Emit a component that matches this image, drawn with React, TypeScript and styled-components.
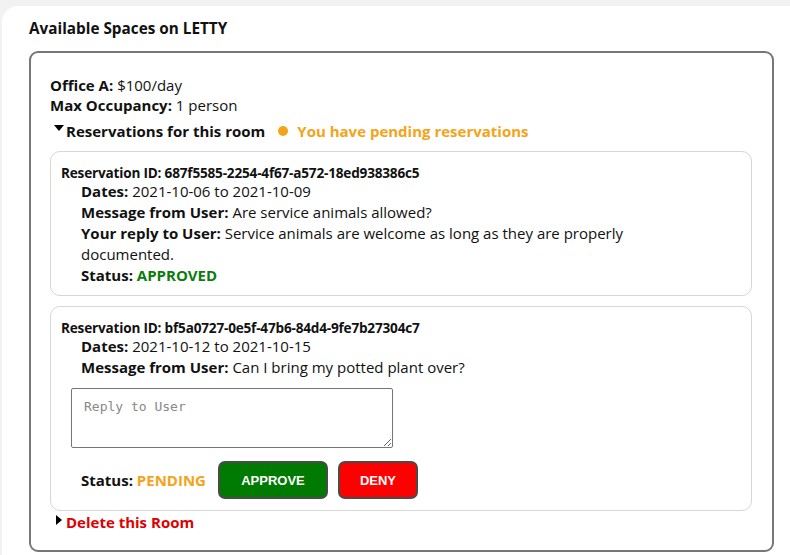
import React from "react";
import styled, { createGlobalStyle } from "styled-components";

const Global = createGlobalStyle`
  html, body { margin: 0; padding: 0; }
  body {
    background: #f2f2f2;
    font-family: "Open Sans", "Noto Sans", sans-serif;
    color: #111;
    overflow: hidden;
  }
`;

const Page = styled.div`
  height: 555px;
  padding: 6px 0 0 2px;
  box-sizing: border-box;
`;

const Panel = styled.main`
  background: #fff;
  border-radius: 16px 0 0 0;
  height: 100%;
  padding: 11px 16px 0 27px;
  box-sizing: border-box;
`;

const Title = styled.h1`
  margin: 0 0 12px 0;
  font-size: 15.3px;
  font-weight: 700;
  line-height: 22px;
`;

const RoomCard = styled.section`
  border: 2px solid #777;
  border-radius: 9px;
  padding: 22px 20px 12px 19px;
  height: 501px;
  box-sizing: border-box;
`;

const Line = styled.div`
  font-size: 15px;
  line-height: 21px;
`;

const TopLine = styled(Line)`
  line-height: 20px;
`;

const B = styled.b`
  font-weight: 700;
`;

const Colored = styled.b<{ $c: string }>`
  font-weight: 700;
  color: ${(p) => p.$c};
`;

const Details = styled.details`
  margin-top: 5px;
`;

const Summary = styled.summary<{ $c?: string }>`
  list-style: none;
  display: flex;
  align-items: center;
  font-size: 15px;
  font-weight: 700;
  line-height: 22px;
  color: ${(p) => p.$c || "#111"};
  cursor: pointer;
  &::-webkit-details-marker { display: none; }
`;

const TriDown = styled.span`
  width: 0;
  height: 0;
  border-left: 5px solid transparent;
  border-right: 5px solid transparent;
  border-top: 6px solid #000;
  margin: 0 2px 6px 4px;
`;

const TriRight = styled.span`
  width: 0;
  height: 0;
  border-top: 5px solid transparent;
  border-bottom: 5px solid transparent;
  border-left: 6px solid #000;
  margin: 0 4px 4px 6px;
`;

const Pending = styled.span`
  display: inline-flex;
  align-items: center;
  margin-left: 13px;
  color: #f5a318;
`;

const Dot = styled.span`
  width: 10px;
  height: 10px;
  border-radius: 50%;
  background: #f5a318;
  margin-right: 9px;
`;

const ResList = styled.div`
  display: flex;
  flex-direction: column;
  gap: 10px;
  margin-top: 9px;
`;

const ResBox = styled.div`
  border: 1px solid #d6d6d6;
  border-radius: 10px;
  padding: 12px 20px 9px 10px;
`;

const ResId = styled.div`
  font-size: 13.6px;
  font-weight: 700;
  line-height: 17px;
  letter-spacing: -0.2px;
`;

const ResBody = styled.div`
  padding-left: 20px;
  width: 560px;
`;

const ReplyArea = styled.textarea`
  display: block;
  margin: 10px 0 0 10px;
  width: 322px;
  height: 60px;
  box-sizing: border-box;
  border: 1px solid #767676;
  border-radius: 2px;
  padding: 10px 12px;
  font-family: "DejaVu Sans Mono", "Liberation Mono", monospace;
  font-size: 13px;
  resize: vertical;
  &::placeholder { color: #888; }
`;

const Actions = styled.div`
  display: flex;
  align-items: center;
  gap: 10px;
  margin: 13px 0 2px 20px;
`;

const StatusText = styled(Line)`
  margin-right: 2px;
`;

const ActionBtn = styled.button<{ $bg: string; $w: number }>`
  width: ${(p) => p.$w}px;
  height: 38px;
  background: ${(p) => p.$bg};
  color: #fff;
  border: 2px solid #4a4a4a;
  border-radius: 7px;
  font-family: "Liberation Sans", Arial, sans-serif;
  font-size: 13px;
  font-weight: 700;
  cursor: pointer;
`;

export default function App() {
  return (
    <>
      <Global />
      <Page>
        <Panel>
          <Title>Available Spaces on LETTY</Title>
          <RoomCard>
            <TopLine>
              <B>Office A:</B> $100/day
            </TopLine>
            <TopLine>
              <B>Max Occupancy:</B> 1 person
            </TopLine>
            <Details open>
              <Summary>
                <TriDown />
                Reservations for this room
                <Pending>
                  <Dot />
                  You have pending reservations
                </Pending>
              </Summary>
              <ResList>
                <ResBox>
                  <ResId>Reservation ID: 687f5585-2254-4f67-a572-18ed938386c5</ResId>
                  <ResBody>
                    <Line>
                      <B>Dates:</B> 2021-10-06 to 2021-10-09
                    </Line>
                    <Line>
                      <B>Message from User:</B> Are service animals allowed?
                    </Line>
                    <Line>
                      <B>Your reply to User:</B> Service animals are welcome as long as they are properly documented.
                    </Line>
                    <Line>
                      <B>Status:</B> <Colored $c="#0b7d0b">APPROVED</Colored>
                    </Line>
                  </ResBody>
                </ResBox>
                <ResBox>
                  <ResId>Reservation ID: bf5a0727-0e5f-47b6-84d4-9fe7b27304c7</ResId>
                  <ResBody>
                    <Line>
                      <B>Dates:</B> 2021-10-12 to 2021-10-15
                    </Line>
                    <Line>
                      <B>Message from User:</B> Can I bring my potted plant over?
                    </Line>
                  </ResBody>
                  <ReplyArea placeholder="Reply to User" />
                  <Actions>
                    <StatusText>
                      <B>Status:</B> <Colored $c="#f5a318">PENDING</Colored>
                    </StatusText>
                    <ActionBtn $bg="#007a00" $w={110}>APPROVE</ActionBtn>
                    <ActionBtn $bg="#ff0000" $w={80}>DENY</ActionBtn>
                  </Actions>
                </ResBox>
              </ResList>
            </Details>
            <details>
              <Summary $c="#e00000">
                <TriRight />
                Delete this Room
              </Summary>
            </details>
          </RoomCard>
        </Panel>
      </Page>
    </>
  );
}
